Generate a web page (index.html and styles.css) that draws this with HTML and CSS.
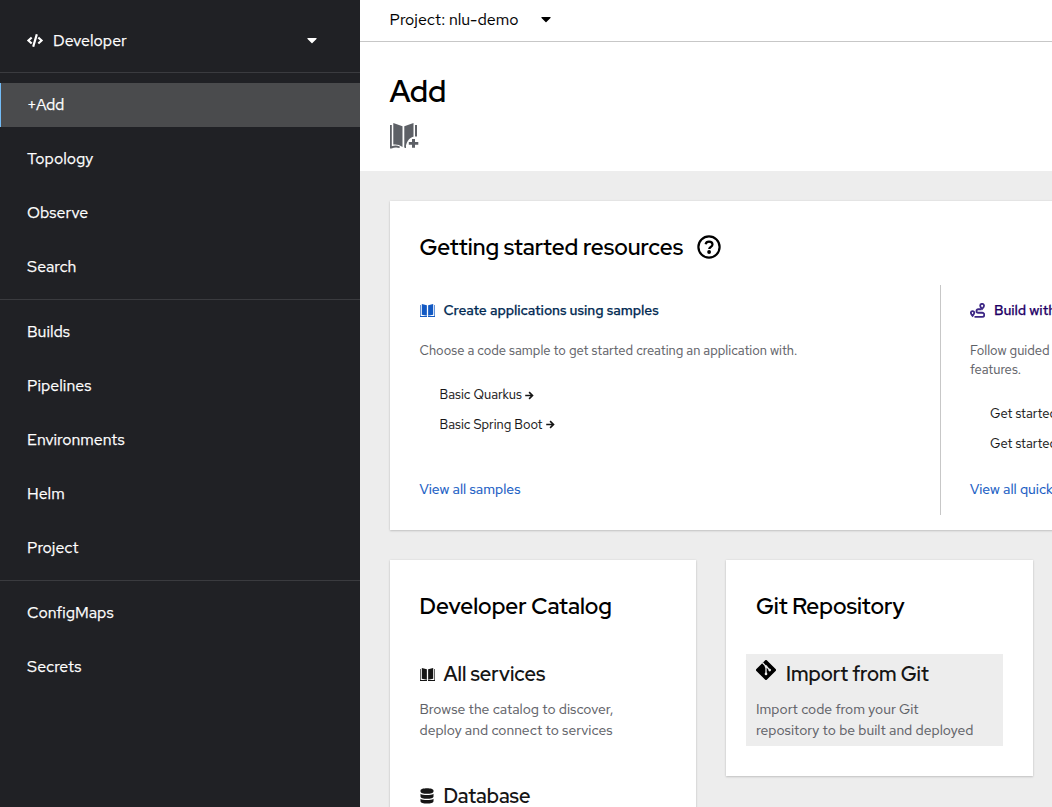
FILE: index.html
```html
<!DOCTYPE html>
<html lang="en">
<head>
<meta charset="utf-8">
<title>Add</title>
<link rel="stylesheet" href="styles.css">
</head>
<body>
<svg class="sprite" aria-hidden="true">
  <symbol id="caret" viewBox="0 0 320 512"><path d="M31.3 192h257.3c17.8 0 26.7 21.5 14.1 34.1L174.1 354.8c-7.8 7.8-20.5 7.8-28.3 0L17.2 226.1C4.6 213.5 13.5 192 31.3 192z"/></symbol>
  <symbol id="arrow" viewBox="0 0 10 10"><path d="M0.8 5h8M5.1 1.2L8.9 5 5.1 8.8" fill="none" stroke="currentColor" stroke-width="1.8"/></symbol>
  <symbol id="book" viewBox="0 0 28 26"><path d="M0 2h1.8v21.3q4-1.5 8 .2l-.3 1.5q-4-1.400-8 .5H0zM3.300 0l9.200 3.300v20.600q-4.300-3-9.200-2.300zM14.300 3.300L23.500 0v21.600q-4.900-.7-9.200 2.300zM25 2h2v23.500h-1.500q-4-1.900-8-.5l-.3-1.500q4-1.700 7.800-.2z"/></symbol>
  <symbol id="small-book" viewBox="0 0 14 12"><path d="M0 .8h.6v10.400h5.900v.8H0zM1.700 0l4.700 1v9.800L1.700 10zM7.600 1l4.700-1v10l-4.700.8zM13.400.8h.6V12H7.500v-.8h5.900z"/></symbol>
</svg>
<div class="app">
  <nav class="sidebar">
    <div class="perspective">
      <svg class="code" viewBox="0 0 640 512"><path d="M278.9 511.5l-61-17.7c-6.4-1.8-10-8.500-8.200-14.900L346.200 8.700c1.800-6.400 8.500-10 14.900-8.200l61 17.700c6.400 1.800 10 8.500 8.200 14.900L293.800 503.300c-1.900 6.400-8.500 10.100-14.900 8.200zm-114-112.200l43.500-46.400c4.600-4.900 4.300-12.700-.8-17.200L117 256l90.600-79.700c5.100-4.500 5.500-12.300.8-17.200l-43.500-46.400c-4.500-4.800-12.100-5.100-17-.5L3.800 247.200c-5.100 4.700-5.100 12.800 0 17.500l144.100 135.100c4.900 4.600 12.500 4.400 17-.5zm327.200.6l144.100-135.100c5.100-4.700 5.100-12.800 0-17.500L492.100 112.100c-4.800-4.500-12.400-4.300-17 .5L431.600 159c-4.600 4.900-4.300 12.700.8 17.200L523 256l-90.600 79.700c-5.100 4.500-5.500 12.300-.8 17.200l43.500 46.400c4.500 4.900 12.100 5.100 17 .6z"/></svg>
      <span>Developer</span>
      <svg class="caret"><use href="#caret"/></svg>
    </div>
    <ul class="nav-group">
      <li class="nav-item active">+Add</li>
      <li class="nav-item">Topology</li>
      <li class="nav-item">Observe</li>
      <li class="nav-item">Search</li>
    </ul>
    <ul class="nav-group">
      <li class="nav-item">Builds</li>
      <li class="nav-item">Pipelines</li>
      <li class="nav-item">Environments</li>
      <li class="nav-item">Helm</li>
      <li class="nav-item">Project</li>
    </ul>
    <ul class="nav-group">
      <li class="nav-item">ConfigMaps</li>
      <li class="nav-item">Secrets</li>
    </ul>
  </nav>
  <main class="main">
    <div class="project-bar"><span>Project: nlu-demo</span><svg class="caret"><use href="#caret"/></svg></div>
    <header class="page-header">
      <h1>Add</h1>
      <svg class="add-icon" viewBox="0 0 29 27"><use href="#book" width="28" height="26"/><path class="cutout" d="M15.500 27c0-7 3-12.500 9-13.500h4V27z"/><path d="M14.500 22.500h1.500v2.500h-1.500zM22 16h3v3.100h3.300v2.600H25v3.100h-3v-3.100h-3.200v-2.600H22zM26 2h1v11h-1z"/></svg>
    </header>
    <div class="content">
      <section class="card getting-started">
        <h2>Getting started resources
          <svg class="help" viewBox="0 0 24 24"><circle cx="12" cy="12" r="10.600"/><path d="M8.600 9.200C9 7.400 10.300 6.600 12 6.600c2 0 3.500 1.100 3.500 2.900 0 2.500-3.300 2.400-3.300 4.500"/><circle class="dot" cx="12.100" cy="17" r="1.900"/></svg>
        </h2>
        <div class="columns">
          <div class="column">
            <h3 class="samples"><svg class="mini-book"><use href="#small-book"/></svg>Create applications using samples</h3>
            <p>Choose a code sample to get started creating an application with.</p>
            <ul>
              <li>Basic Quarkus<svg class="arrow"><use href="#arrow"/></svg></li>
              <li>Basic Spring Boot<svg class="arrow"><use href="#arrow"/></svg></li>
            </ul>
            <a>View all samples</a>
          </div>
          <div class="column">
            <h3 class="tours"><svg class="route" viewBox="0 0 14 14"><path d="M11.300 5.500C10 4.200 9.500 3.500 9.500 2.600a1.800 1.800 0 0 1 3.600 0c0 .9-.5 1.600-1.800 2.900zM2.400 12C1.200 10.600.8 10 .8 9.200a1.600 1.600 0 0 1 3.200 0c0 .8-.4 1.400-1.600 2.800z"/><path d="M10.800 5.800H7.700a1.500 1.500 0 0 0 0 3.300h3.700a1.800 1.800 0 0 1 0 3.900H4.200"/></svg>Build with</h3>
            <p>Follow guided<br>features.</p>
            <ul>
              <li>Get started</li>
              <li>Get started</li>
            </ul>
            <a>View all quick</a>
          </div>
        </div>
      </section>
      <div class="cards">
        <section class="card">
          <h2>Developer Catalog</h2>
          <div class="entry">
            <h4><svg class="mini-book"><use href="#small-book"/></svg>All services</h4>
            <p>Browse the catalog to discover,<br>deploy and connect to services</p>
          </div>
          <div class="entry">
            <h4><svg class="db" viewBox="0 0 14 16"><path d="M.5 2.500C.5 1 3.500.2 7 .2s6.500.8 6.500 2.300v1C13.500 5 10.500 5.800 7 5.800S.5 5 .5 3.500zM.5 5.700C2 6.700 4.300 7 7 7s5-.3 6.500-1.300v2.800c0 1.500-3 2.300-6.500 2.300S.5 10 .5 8.500zM.5 10.700C2 11.700 4.300 12 7 12s5-.3 6.500-1.300v2.500c0 1.500-3 2.300-6.500 2.300S.5 14.700.5 13.200z"/></svg>Database</h4>
          </div>
        </section>
        <section class="card">
          <h2>Git Repository</h2>
          <div class="entry hovered">
            <h4><svg class="git" viewBox="0 0 20 20"><path d="M9 .4a1.400 1.400 0 0 1 2 0l8.600 8.600a1.400 1.400 0 0 1 0 2L11 19.600a1.400 1.400 0 0 1-2 0L.4 11a1.400 1.400 0 0 1 0-2z"/><path class="branch" d="M6.500 2.800L10 6.400v7.400M10.400 6.500l3.400 3.500"/><circle cx="10" cy="6.500" r="1.300"/><circle cx="10" cy="13.900" r="1.300"/><circle cx="13.700" cy="10.100" r="1.300"/></svg>Import from Git</h4>
            <p>Import code from your Git<br>repository to be built and deployed</p>
          </div>
        </section>
      </div>
    </div>
  </main>
</div>
</body>
</html>
```
FILE: styles.css
```css
* { box-sizing: border-box; margin: 0; padding: 0; }
body { font-family: "Red Hat Text", Inter, "Noto Sans", sans-serif; color: #151515; overflow: hidden; }
ul { list-style: none; }
svg { flex: none; fill: currentColor; }
.sprite { display: none; }
.app { display: flex; width: 1052px; height: 807px; overflow: hidden; }
.sidebar { width: 360px; flex: none; background: #202125; color: #fff; font-size: 16px; -webkit-text-stroke: .25px currentColor; }
.perspective { height: 72px; padding: 9px 0 0 27px; display: flex; align-items: center; gap: 10px; }
.code { width: 16px; height: 13px; }
.perspective .caret { margin: -1px 40px 0 auto; }
.caret { width: 16px; height: 16px; }
.nav-group { border-top: 1px solid #3a3b3f; padding: 10px 0; display: flex; flex-direction: column; gap: 10px; }
.nav-item { height: 44px; line-height: 44px; padding-left: 27px; }
.nav-item.active { background: #4a4b4d; border-left: 1px solid #73bcf7; padding-left: 26px; letter-spacing: -.3px; }
.main { flex: 1; min-width: 0; overflow: hidden; background: #ededed; }
.project-bar { height: 42px; background: #fff; border-bottom: 1px solid #c7c7c7; padding: 0 0 3px 29.500px; display: flex; align-items: center; gap: 19px; font-size: 16px; color: #000; -webkit-text-stroke: .1px currentColor; }
.page-header { height: 129px; background: #fff; padding: 29px 0 0 29.500px; }
h1, h2, h4 { font-family: "Red Hat Display", "Red Hat Text", Inter, sans-serif; }
h1 { height: 40px; line-height: 40px; font-size: 30px; font-weight: 600; color: #000; }
.add-icon { display: block; width: 29px; height: 27px; margin-top: 12px; color: #5d6066; }
.cutout { fill: #fff; }
.content { padding: 30px 0 0 30px; }
.card { background: #fff; box-shadow: 0 1px 2px rgba(3,3,3,.16), 0 0 2px rgba(3,3,3,.08); }
h2 { font-size: 22.500px; font-weight: 600; color: #000; line-height: 32px; display: flex; align-items: center; }
.getting-started { width: 1300px; height: 329px; padding: 30px 29.500px; }
.help { width: 24px; height: 24px; margin-left: 14px; fill: none; stroke: #000; stroke-width: 2.200; }
.help .dot { fill: #000; stroke: none; }
.columns { display: flex; height: 230px; margin-top: 22px; }
.column { width: 521.500px; flex: none; display: flex; flex-direction: column; padding: 15px 0 16px; }
.column + .column { border-left: 1px solid #c7c7c7; margin-left: -1px; padding-left: 29px; width: 600px; }
h3 { display: flex; align-items: center; gap: 9px; height: 20px; font-size: 14px; font-weight: 500; letter-spacing: -.05px; white-space: nowrap; -webkit-text-stroke: .25px currentColor; }
.samples { color: #002952; }
.samples svg { color: #1259c3; }
.mini-book { width: 15px; height: 13px; }
.tours { color: #1f0066; }
.route { width: 15px; height: 15px; fill: none; stroke: #3d2785; stroke-width: 1.700; }
.column p { margin-top: 21px; font-size: 13px; line-height: 19px; color: #5d6066; white-space: nowrap; -webkit-text-stroke: .1px currentColor; }
.column ul { padding: 20.500px 0 0 20px; font-size: 13px; -webkit-text-stroke: .1px currentColor; }
.column li { height: 29.500px; line-height: 30px; display: flex; align-items: center; gap: 2px; }
.arrow { width: 10px; height: 9px; }
.column a { margin-top: auto; font-size: 14px; line-height: 20px; color: #1259c3; -webkit-text-stroke: .15px currentColor; }
.cards { display: flex; align-items: flex-start; gap: 30px; margin-top: 30px; }
.cards .card { width: 306px; padding: 30px 29.500px; flex: none; }
.cards .card + .card { width: 307px; padding-left: 30px; }
.entry { margin-top: 32px; height: 92px; }
.entry + .entry { margin-top: 30px; }
h4 { display: flex; align-items: center; gap: 9px; height: 40px; font-size: 20px; font-weight: 600; }
.entry p { margin-top: 5px; font-size: 14px; line-height: 21px; color: #5d6066; white-space: nowrap; -webkit-text-stroke: .1px currentColor; }
.db { width: 14px; height: 16px; margin-right: 1px; }
.hovered { background: #ededed; margin-left: -10px; padding-left: 10px; width: 257px; }
.git { width: 20px; height: 20px; color: #000; margin: -8px 1px 0 0; }
.git circle { fill: #ededed; }
.branch { fill: none; stroke: #ededed; stroke-width: 1.300; }
```
